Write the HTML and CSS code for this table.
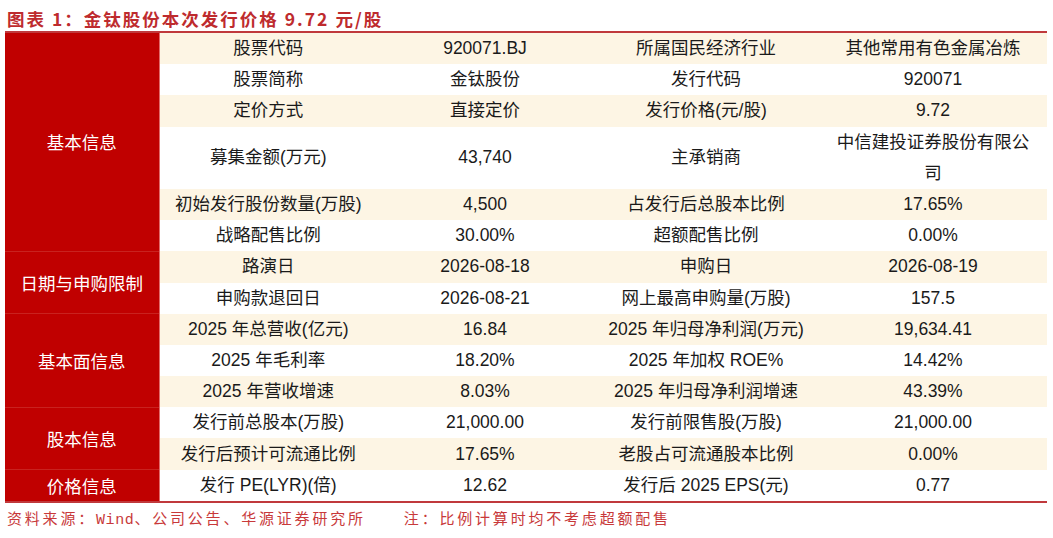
FILE: index.html
```html
<!DOCTYPE html>
<html lang="zh">
<head>
<meta charset="utf-8">
<link rel="stylesheet" href="styles.css">
</head>
<body>
<div class="page">
  <div class="title">图表 1：金钛股份本次发行价格 9.72 元/股</div>
  <table class="ipo">
    <colgroup>
      <col class="c0"><col class="c1"><col class="c2"><col class="c3"><col class="c4">
    </colgroup>
    <tbody>
      <tr class="odd"><th rowspan="6">基本信息</th><td>股票代码</td><td>920071.BJ</td><td>所属国民经济行业</td><td>其他常用有色金属冶炼</td></tr>
      <tr class="even"><td>股票简称</td><td>金钛股份</td><td>发行代码</td><td>920071</td></tr>
      <tr class="odd"><td>定价方式</td><td>直接定价</td><td>发行价格(元/股)</td><td>9.72</td></tr>
      <tr class="even dbl"><td>募集金额(万元)</td><td>43,740</td><td>主承销商</td><td class="wrap">中信建投证券股份有限公司</td></tr>
      <tr class="odd"><td>初始发行股份数量(万股)</td><td>4,500</td><td>占发行后总股本比例</td><td>17.65%</td></tr>
      <tr class="even"><td>战略配售比例</td><td>30.00%</td><td>超额配售比例</td><td>0.00%</td></tr>
      <tr class="odd grp"><th rowspan="2">日期与申购限制</th><td>路演日</td><td>2026-08-18</td><td>申购日</td><td>2026-08-19</td></tr>
      <tr class="even"><td>申购款退回日</td><td>2026-08-21</td><td>网上最高申购量(万股)</td><td>157.5</td></tr>
      <tr class="odd grp"><th rowspan="3">基本面信息</th><td>2025 年总营收(亿元)</td><td>16.84</td><td>2025 年归母净利润(万元)</td><td>19,634.41</td></tr>
      <tr class="even"><td>2025 年毛利率</td><td>18.20%</td><td>2025 年加权 ROE%</td><td>14.42%</td></tr>
      <tr class="odd"><td>2025 年营收增速</td><td>8.03%</td><td>2025 年归母净利润增速</td><td>43.39%</td></tr>
      <tr class="even grp"><th rowspan="2">股本信息</th><td>发行前总股本(万股)</td><td>21,000.00</td><td>发行前限售股(万股)</td><td>21,000.00</td></tr>
      <tr class="odd"><td>发行后预计可流通比例</td><td>17.65%</td><td>老股占可流通股本比例</td><td>0.00%</td></tr>
      <tr class="even grp"><th>价格信息</th><td>发行 PE(LYR)(倍)</td><td>12.62</td><td>发行后 2025 EPS(元)</td><td>0.77</td></tr>
    </tbody>
  </table>
  <div class="note"><span>资料来源：<span class="latin">Wind</span>、公司公告、华源证券研究所</span><span class="note-right">注：比例计算时均不考虑超额配售</span></div>
</div>
</body>
</html>
```

FILE: styles.css
```css
html, body {
  margin: 0;
  padding: 0;
  background: #ffffff;
}

.page {
  width: 1042px;
  padding-left: 5px;
}

.title {
  height: 33px;
  box-sizing: border-box;
  padding: 9px 0 0 2px;
  font-family: "Noto Sans CJK SC", sans-serif;
  font-weight: bold;
  font-size: 17.5px;
  line-height: 20px;
  letter-spacing: 2px;
  color: #be2b2e;
  white-space: nowrap;
  border-bottom: 2px solid #c0393c;
}

.ipo {
  width: 1042px;
  table-layout: fixed;
  border-collapse: collapse;
  border-spacing: 0;
  font-family: "Liberation Sans", "Noto Sans CJK SC", sans-serif;
  font-size: 17.5px;
  color: #1a1a1a;
  border-bottom: 2px solid #c0393c;
}

.c0 { width: 154px; }
.c1 { width: 218px; }
.c2 { width: 216px; }
.c3 { width: 226px; }
.c4 { width: 228px; }

.ipo tr {
  height: 31.2px;
}

.ipo tr.dbl {
  height: 62.4px;
}

.ipo td {
  padding: 0;
  text-align: center;
  vertical-align: middle;
  line-height: 31px;
  white-space: nowrap;
}

.ipo td.wrap {
  white-space: normal;
  padding: 0 10px;
}

.ipo th {
  padding: 0;
  background: #c00000;
  color: #ffffff;
  font-weight: normal;
  text-align: center;
  vertical-align: middle;
  border-right: 1px solid #e26a6a;
}

.ipo tr.grp th {
  border-top: 1px solid #c9221f;
}

.odd td {
  background: #fdf5e4;
}

.even td {
  background: #ffffff;
}

.note {
  display: flex;
  padding: 8px 0 0 2px;
  font-family: "Liberation Mono", "Noto Sans CJK SC", monospace;
  font-size: 15px;
  line-height: 20px;
  letter-spacing: 2.8px;
  color: #c8393a;
  white-space: nowrap;
}

.note .latin {
  letter-spacing: 0.6px;
}

.note-right {
  margin-left: 38px;
}
```
